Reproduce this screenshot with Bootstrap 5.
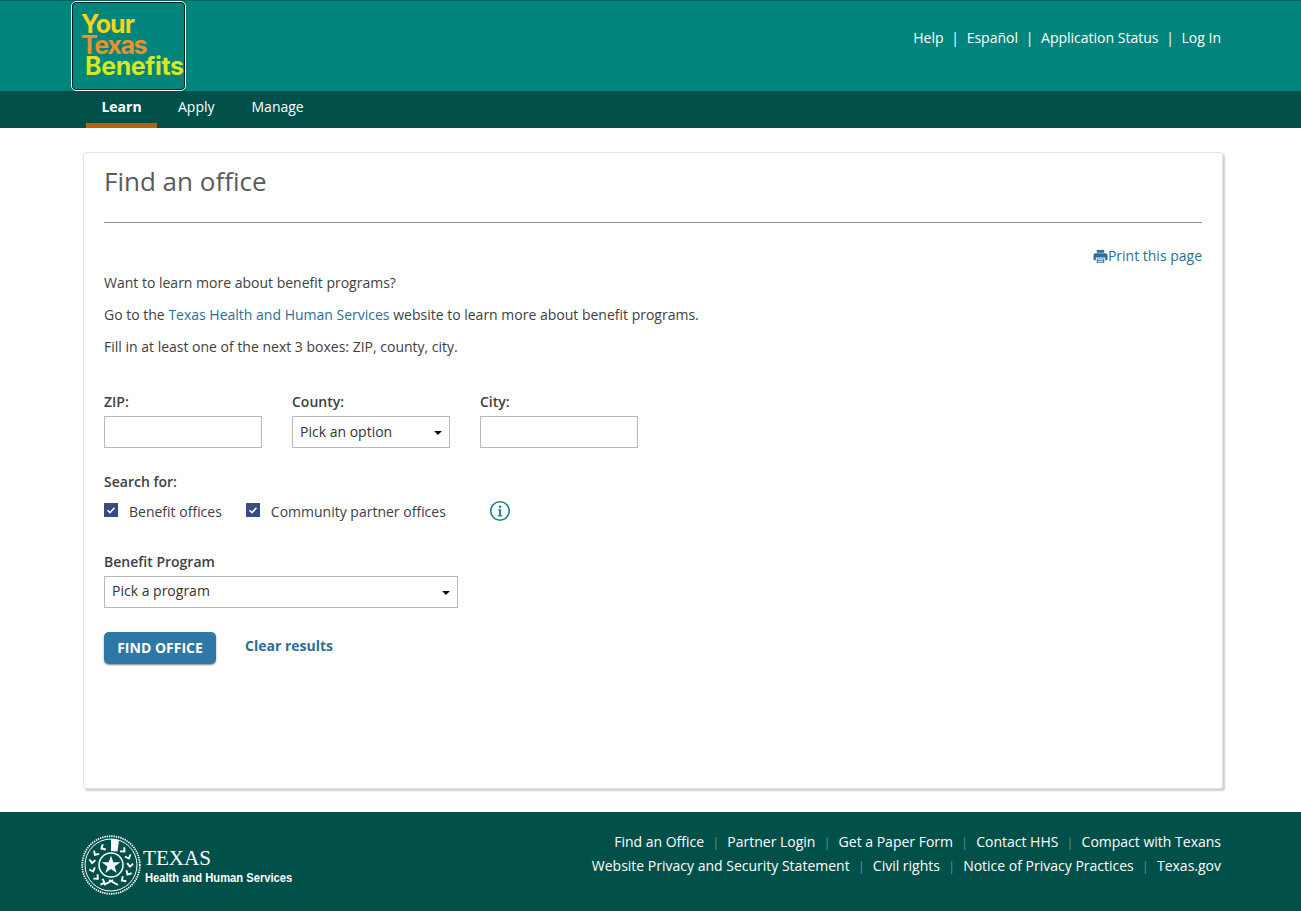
<!DOCTYPE html>
<html lang="en">
<head>
  <meta charset="UTF-8" />
  <title>Find an office</title>
  <meta name="viewport" content="width=device-width, initial-scale=1" />
  <link href="https://cdn.jsdelivr.net/npm/bootstrap@5.3.3/dist/css/bootstrap.min.css" rel="stylesheet" />
  <style>
    body {
      font-family: "Open Sans", sans-serif;
      font-size: 14px;
      color: #404040;
      background: #fff;
      min-height: 911px;
    }
    a { text-decoration: none; color: #2b6f97; }

    .top-bar {
      height: 91px;
      background: #00857c;
      border-top: 1px solid #00625c;
      padding: 0 80px 0 71px;
    }
    .site-logo {
      width: 115px;
      height: 90px;
      background: #00857c;
      border: 2px solid #021f1e;
      outline: 1px solid #fff;
      outline-offset: -1px;
      border-radius: 5px;
      padding: 11px 0 0 8px;
      font-family: "Inter", sans-serif;
      font-weight: 700;
      font-size: 25px;
      line-height: 21px;
      letter-spacing: -0.9px;
      white-space: nowrap;
      overflow: hidden;
    }
    .logo-your { color: #f7d417; }
    .logo-texas { color: #e8922e; letter-spacing: -1.4px; }
    .logo-benefits { color: #d9e621; padding-left: 4px; letter-spacing: -0.4px; }

    .top-links { padding-top: 27px; font-size: 14px; color: #fff; line-height: 19px; }
    .top-links a { color: #fff; }
    .top-links .sep { margin: 0 7.7px; }

    .main-nav {
      height: 37px;
      background: #00504a;
      padding-left: 86px;
    }
    .main-nav a {
      display: block;
      color: #fff;
      height: 37px;
      line-height: 32px;
      font-size: 14px;
    }
    .main-nav .tab-learn {
      width: 71px;
      text-align: center;
      font-weight: 700;
      border-bottom: 5px solid #b7630f;
      margin-right: 21px;
    }
    .main-nav .tab-apply { margin-right: 37px; }

    .office-panel {
      margin: 24px 78px 23px 83px;
      height: 637px;
      background: #fff;
      border: 1px solid #e4e4e4;
      border-radius: 3px;
      box-shadow: 2px 2px 2px #cfcfcf;
      padding: 0 20px;
    }
    .office-panel h1 {
      font-family: "Open Sans", sans-serif;
      font-size: 26px;
      font-weight: 400;
      color: #5a5a5a;
      line-height: 36px;
      margin: 10px 0 0;
      padding-bottom: 23px;
      border-bottom: 1px solid #8c8c8c;
    }
    .print-row {
      margin-top: 23px;
      height: 20px;
      line-height: 20px;
    }
    .print-row a { display: inline-flex; align-items: center; }
    .intro-text { margin: 0 0 13px; line-height: 19px; }
    .intro-first { margin-top: 7px; }

    .field-label { display: block; font-weight: 600; line-height: 19px; margin-bottom: 5px; color: #404040; }
    .office-input, .office-select {
      display: block;
      height: 32px;
      border: 1px solid #b9b9b9;
      background: #fff;
      border-radius: 0;
      color: #333;
      padding: 0 7px;
      line-height: 30px;
      position: relative;
      font-size: 14px;
    }
    .office-input, .narrow-select { width: 158px; }
    .wide-select { width: 354px; line-height: 28px; }
    .office-select::after {
      content: "";
      position: absolute;
      right: 7px;
      top: 14px;
      border-left: 4px solid transparent;
      border-right: 4px solid transparent;
      border-top: 4px solid #111;
    }
    .zip-row { margin-top: 36px; gap: 30px; }
    .search-block { margin-top: 24px; }
    .search-block .field-label { font-weight: 600; margin-bottom: 0; }
    .check-row { height: 30px; margin-top: 5px; align-items: center; }
    .check-box {
      width: 14px;
      height: 14px;
      background: #3a4a82;
      display: block;
      margin-right: 11px;
      margin-top: -3px;
      flex: none;
    }
    .info-mark { margin-left: 43px; }
    .program-block { margin-top: 26px; }
    .program-block .field-label { margin-bottom: 5px; }
    .action-row { margin-top: 24px; }
    .find-btn {
      width: 112px;
      height: 32px;
      background: #2f77a5;
      color: #fff;
      font-weight: 700;
      font-size: 14px;
      border: 0;
      border-radius: 5px;
      box-shadow: 0 1px 2px #888;
      padding: 0 0 2px;
    }
    .clear-link { font-weight: 700; margin-left: 29px; margin-top: -6px; }

    .site-footer {
      height: 99px;
      background: #00504a;
      padding: 20px 80px 0 81px;
      color: #fff;
    }
    .site-footer a { color: #fff; }
    .seal-block { margin-top: 3px; }
    .seal-name { margin-left: 2px; padding-top: 11px; }
    .seal-texas {
      font-family: "Liberation Serif", serif;
      font-size: 22px;
      line-height: 24px;
      transform: scaleX(0.96);
      transform-origin: left center;
    }
    .seal-hhs {
      font-family: "Liberation Sans", sans-serif;
      font-weight: 700;
      font-size: 13px;
      line-height: 15px;
      transform: scaleX(0.86);
      transform-origin: left center;
      white-space: nowrap;
      margin-left: 2px;
    }
    .footer-links { text-align: right; line-height: 19px; }
    .footer-links div { margin-bottom: 5px; }
    .footer-links div + div { margin-top: -1px; }
    .footer-links .sep { color: #5f8f8b; margin: 0 8px; font-size: 13px; }
  </style>
</head>
<body>
  <!-- Header -->
  <header class="top-bar d-flex justify-content-between">
    <a href="#" class="site-logo d-block">
      <div class="logo-your">Your</div>
      <div class="logo-texas">Texas</div>
      <div class="logo-benefits">Benefits</div>
    </a>
    <div class="top-links">
      <a href="#">Help</a><span class="sep">|</span><a href="#">Español</a><span class="sep">|</span><a href="#">Application Status</a><span class="sep">|</span><a href="#">Log In</a>
    </div>
  </header>

  <nav class="main-nav d-flex">
    <a href="#" class="tab-learn">Learn</a>
    <a href="#" class="tab-apply">Apply</a>
    <a href="#">Manage</a>
  </nav>

  <!-- Main Content -->
  <main class="office-panel">
    <h1>Find an office</h1>

    <div class="print-row text-end">
      <a href="#">
        <svg width="15" height="15" viewBox="0 0 16 16" fill="#2b6f97">
          <path d="M4 1h8v3H4z"/>
          <path d="M3 4.500h10a2.500 2.500 0 0 1 2.500 2.500v4a1 1 0 0 1-1 1H13V9H3v3H1.500a1 1 0 0 1-1-1V7A2.500 2.500 0 0 1 3 4.500z"/>
          <path d="M4 10h8v5H4zm1 1v1h6v-1zm0 2v1h6v-1z" fill-rule="evenodd"/>
        </svg>Print this page
      </a>
    </div>

    <p class="intro-text intro-first">Want to learn more about benefit programs?</p>
    <p class="intro-text">Go to the <a href="#">Texas Health and Human Services</a> website to learn more about benefit programs.</p>
    <p class="intro-text">Fill in at least one of the next 3 boxes: ZIP, county, city.</p>

    <div class="zip-row d-flex">
      <div>
        <label class="field-label">ZIP:</label>
        <div class="office-input"></div>
      </div>
      <div>
        <label class="field-label">County:</label>
        <div class="office-select narrow-select">Pick an option</div>
      </div>
      <div>
        <label class="field-label">City:</label>
        <div class="office-input"></div>
      </div>
    </div>

    <div class="search-block">
      <label class="field-label">Search for:</label>
      <div class="check-row d-flex">
        <span class="check-box">
          <svg width="14" height="14" viewBox="0 0 14 14" class="d-block"><path d="M3.500 7.200l2.500 2.400 4.500-4.800" fill="none" stroke="#fff" stroke-width="1.500"/></svg>
        </span>
        <span>Benefit offices</span>
        <span class="check-box ms-4">
          <svg width="14" height="14" viewBox="0 0 14 14" class="d-block"><path d="M3.500 7.200l2.500 2.400 4.500-4.800" fill="none" stroke="#fff" stroke-width="1.500"/></svg>
        </span>
        <span>Community partner offices</span>
        <svg class="info-mark" width="22" height="22" viewBox="0 0 22 22">
          <circle cx="11" cy="11" r="9.200" fill="none" stroke="#1f7f8c" stroke-width="1.600"/>
          <circle cx="11" cy="6.700" r="1.300" fill="#1f7f8c"/>
          <path d="M9.200 9.300h2.900v6h1.200v1.200H8.900v-1.200h1.200v-4.800H9.200z" fill="#1f7f8c"/>
        </svg>
      </div>
    </div>

    <div class="program-block">
      <label class="field-label">Benefit Program</label>
      <div class="office-select wide-select">Pick a program</div>
    </div>

    <div class="action-row d-flex align-items-center">
      <button type="button" class="find-btn">FIND OFFICE</button>
      <a href="#" class="clear-link">Clear results</a>
    </div>
  </main>

  <!-- Footer -->
  <footer class="site-footer d-flex justify-content-between">
    <div class="d-flex seal-block">
      <svg width="60" height="60" viewBox="0 0 60 60" fill="none" stroke="#fff">
        <defs>
          <path id="leafL" d="M3.200 -3L0 0L3.200 3"/>
          <path id="leafR" d="M-3.200 -3L0 0L-3.200 3"/>
        </defs>
        <circle cx="30" cy="30" r="28.800" stroke-width="1.800" stroke-dasharray="1.400 0.900"/>
        <circle cx="30" cy="30" r="26" stroke-width="1"/>
        <path d="M30 4a26 26 0 0 1 8 1.300L36.500 16.500 30 16z" fill="#fff" stroke="none"/>
        <circle cx="30" cy="30" r="12" stroke-width="1.500"/>
        <path d="M30 20.500l2.300 6.700h7l-5.700 4.200 2.100 6.700-5.700-4.100-5.700 4.100 2.100-6.700-5.700-4.200h7z" fill="#fff" stroke="none"/>
        <g stroke-width="1.900">
          <use href="#leafL" transform="rotate(-30 30 30) translate(30 11)"/>
          <use href="#leafL" transform="rotate(-58 30 30) translate(30 11)"/>
          <use href="#leafL" transform="rotate(-84 30 30) translate(30 11)"/>
          <use href="#leafL" transform="rotate(-110 30 30) translate(30 11)"/>
          <use href="#leafL" transform="rotate(-136 30 30) translate(30 11)"/>
          <use href="#leafL" transform="rotate(-160 30 30) translate(30 11)"/>
          <use href="#leafR" transform="rotate(45 30 30) translate(30 11)"/>
          <use href="#leafR" transform="rotate(70 30 30) translate(30 11)"/>
          <use href="#leafR" transform="rotate(95 30 30) translate(30 11)"/>
          <use href="#leafR" transform="rotate(120 30 30) translate(30 11)"/>
          <use href="#leafR" transform="rotate(145 30 30) translate(30 11)"/>
          <path d="M23 50l9-5M37 50l-9-5"/>
        </g>
      </svg>
      <div class="seal-name">
        <div class="seal-texas">TEXAS</div>
        <div class="seal-hhs">Health and Human Services</div>
      </div>
    </div>
    <div class="footer-links">
      <div><a href="#">Find an Office</a><span class="sep">|</span><a href="#">Partner Login</a><span class="sep">|</span><a href="#">Get a Paper Form</a><span class="sep">|</span><a href="#">Contact HHS</a><span class="sep">|</span><a href="#">Compact with Texans</a></div>
      <div><a href="#">Website Privacy and Security Statement</a><span class="sep">|</span><a href="#">Civil rights</a><span class="sep">|</span><a href="#">Notice of Privacy Practices</a><span class="sep">|</span><a href="#">Texas.gov</a></div>
    </div>
  </footer>

  <script src="https://cdn.jsdelivr.net/npm/bootstrap@5.3.3/dist/js/bootstrap.bundle.min.js"></script>
</body>
</html>
